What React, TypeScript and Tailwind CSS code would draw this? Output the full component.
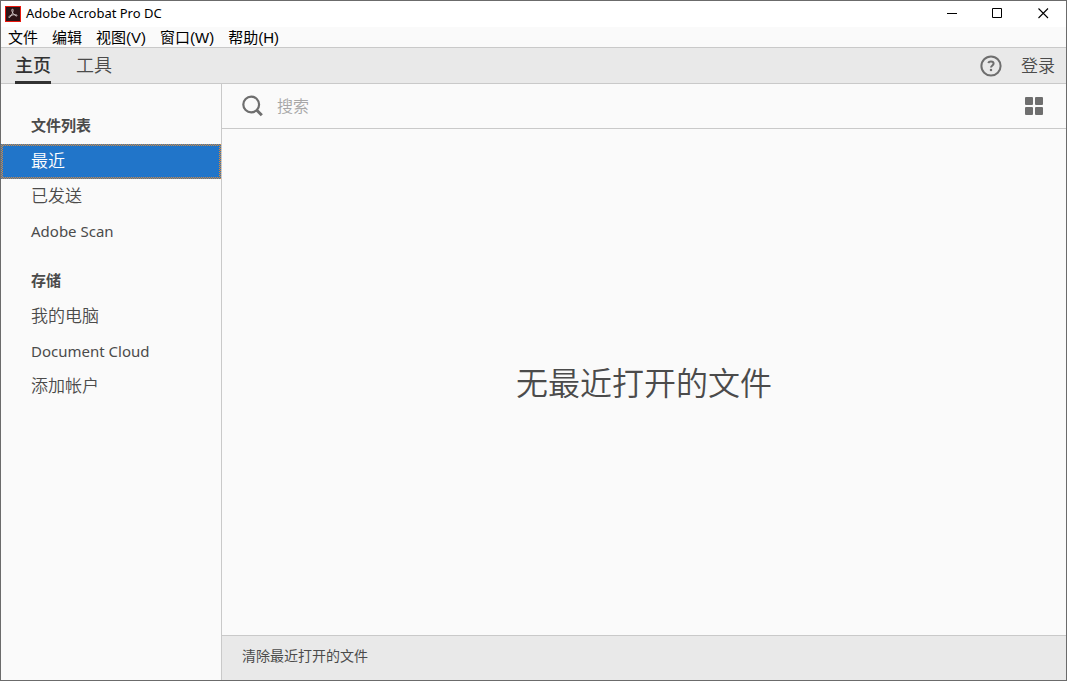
import React from "react";

const fileItems = ["最近", "已发送", "Adobe Scan"];
const storageItems = ["我的电脑", "Document Cloud", "添加帐户"];
const menus = ["文件", "编辑", "视图(V)", "窗口(W)", "帮助(H)"];

function AcrobatIcon() {
  return (
    <svg viewBox="0 0 16 16" className="size-4" aria-hidden="true">
      <rect x="0.5" y="0.5" width="15" height="15" fill="#2d1416" stroke="#e8160c" />
      <path
        d="M7.200 3.200c1-.3 1.200.7.7 2.500-.6 2.300-2.200 5.400-3.400 5.800-1 .3-1.100-.7.200-1.500 1.800-1.100 5.500-1.700 7-1 .9.500.4 1.300-.7.9C9.500 9.400 7.200 6.600 6.900 5c-.2-1-.1-1.600.3-1.800z"
        fill="none"
        stroke="#d9cfcf"
        strokeWidth="0.9"
      />
    </svg>
  );
}

function NavItem({ label, selected = false }: { label: string; selected?: boolean }) {
  const latin = /^[A-Za-z ]+$/.test(label);
  return (
    <li>
      <button
        type="button"
        aria-current={selected ? "page" : undefined}
        className={`flex h-[35px] w-full p-0.5 text-left ${latin ? "text-[15px]" : "text-[17px] font-[350]"} ${
          selected
            ? "bg-[repeating-conic-gradient(#de8a36_0_25%,#2175c9_0_50%)] bg-size-[2px_2px] text-white"
            : "text-[#4b4b4b]"
        }`}
      >
        <span
          className={`flex h-full flex-1 items-center px-7 ${latin ? "" : "pb-px"} ${
            selected ? "bg-[#2175c9]" : ""
          }`}
        >
          {label}
        </span>
      </button>
    </li>
  );
}

function NavSection({ title, items, selected }: { title: string; items: string[]; selected?: string }) {
  return (
    <section>
      <h2 className="flex h-[35px] items-center px-[30px] pb-0.5 text-[15px] font-bold text-[#4b4b4b]">{title}</h2>
      <ul>
        {items.map((item) => (
          <NavItem key={item} label={item} selected={item === selected} />
        ))}
      </ul>
    </section>
  );
}

export default function App() {
  return (
    <div className="flex min-h-screen flex-col border border-[#6b6b6b] bg-[#fafafa] font-['Noto_Sans','Noto_Sans_CJK_SC',sans-serif] text-[#4b4b4b]">
      <header>
        <div className="flex h-[26px] items-center bg-white pl-1 text-black">
          <AcrobatIcon />
          <h1 className="flex-1 pl-[5px] text-[13px]">Adobe Acrobat Pro DC</h1>
          <div className="flex h-full pb-px">
            <button type="button" aria-label="最小化" className="flex w-[46px] items-center justify-center">
              <svg viewBox="0 0 11 11" className="size-[11px]" stroke="currentColor" fill="none">
                <path d="M0 5.500h10" />
              </svg>
            </button>
            <button type="button" aria-label="最大化" className="flex w-[45px] items-center justify-center">
              <svg viewBox="0 0 11 11" className="size-[11px]" stroke="currentColor" fill="none">
                <path d="M.5 .5h9v9h-9z" />
              </svg>
            </button>
            <button type="button" aria-label="关闭" className="flex w-[46px] items-center justify-center">
              <svg viewBox="0 0 11 11" className="size-[11px]" stroke="currentColor" fill="none">
                <path d="M.5 .5l9.500 9.500M10 .5l-9.500 9.500" strokeWidth="1.100" />
              </svg>
            </button>
          </div>
        </div>
        <nav className="flex h-[21px] items-center gap-[14px] border-b border-[#c9c9c9] px-[7px] font-['Liberation_Sans','Noto_Sans_CJK_SC',sans-serif] text-black">
          {menus.map((menu) => (
            <button key={menu} type="button" className="pt-px text-[15px] leading-5">
              {menu}
            </button>
          ))}
        </nav>
        <div className="flex h-9 items-center border-b border-[#c9c9c9] bg-[#e9e9e9] pl-[14px] pr-[11px] text-[18px]">
          <nav className="-mb-px flex h-9 gap-[25px]">
            <button type="button" className="h-full border-b-3 border-[#323232] pt-px font-medium text-[#323232]">
              主页
            </button>
            <button type="button" className="h-full border-b-3 border-transparent pt-px font-[350]">
              工具
            </button>
          </nav>
          <div className="ml-auto flex items-center gap-[19px]">
            <button type="button" aria-label="帮助">
              <svg viewBox="0 0 22 22" className="size-[22px]" fill="none" stroke="#6e6e6e" strokeWidth="2">
                <circle cx="11" cy="11" r="9.600" />
                <path d="M8.200 8c.5-1.200 1.500-1.600 2.700-1.600 1.600 0 2.700.8 2.700 2.100 0 1.900-2.600 2-2.600 4.100" />
                <path d="M9.900 15h2.200" strokeWidth="2.200" />
              </svg>
            </button>
            <button type="button" className="text-[17px] font-[350]">登录</button>
          </div>
        </div>
      </header>
      <div className="flex flex-1">
        <aside className="flex w-[221px] shrink-0 flex-col gap-[15px] border-r border-[#c9c9c9] pt-[25px]">
          <NavSection title="文件列表" items={fileItems} selected="最近" />
          <NavSection title="存储" items={storageItems} />
        </aside>
        <main className="flex min-w-0 flex-1 flex-col">
          <div className="flex h-[45px] items-center border-b border-[#c9c9c9] pl-5 pr-[23px]">
            <label htmlFor="search" aria-label="搜索">
              <svg viewBox="0 0 22 22" className="size-[22px]" fill="none" stroke="#6e6e6e">
                <circle cx="9.200" cy="9.500" r="7.900" strokeWidth="2.200" />
                <path d="M14.800 15.200l5 5" strokeWidth="3" />
              </svg>
            </label>
            <input
              id="search"
              type="text"
              placeholder="搜索"
              className="min-w-0 flex-1 bg-transparent px-[13px] text-[16px] font-[350] outline-none placeholder:text-[#a6a6a6]"
            />
            <button type="button" aria-label="网格视图">
              <svg viewBox="0 0 18 18" className="size-[18px]" fill="#6e6e6e">
                <rect width="8" height="8" rx="1" />
                <rect x="10" width="8" height="8" rx="1" />
                <rect y="10" width="8" height="8" rx="1" />
                <rect x="10" y="10" width="8" height="8" rx="1" />
              </svg>
            </button>
          </div>
          <div className="flex flex-1 items-center justify-center pt-0.5">
            <p className="text-[32px] font-[350]">无最近打开的文件</p>
          </div>
          <footer className="flex h-[45px] items-center border-t border-[#c9c9c9] bg-[#e9e9e9] px-5 pb-1.5">
            <button type="button" className="text-[14px]">清除最近打开的文件</button>
          </footer>
        </main>
      </div>
    </div>
  );
}
